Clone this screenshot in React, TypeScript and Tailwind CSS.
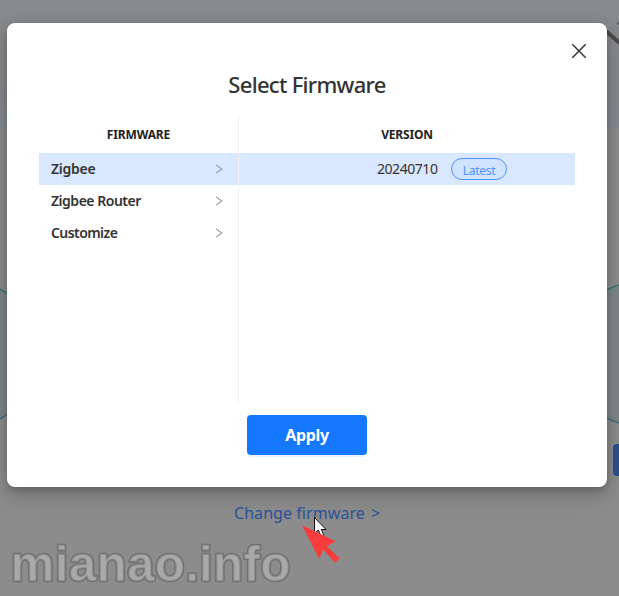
const firmwares = [
  { name: "Zigbee", tracking: "tracking-[-0.25px]", selected: true },
  { name: "Zigbee Router", tracking: "tracking-[-0.48px]", selected: false },
  { name: "Customize", tracking: "tracking-[-0.58px]", selected: false },
];

function Chevron() {
  return (
    <svg width="8" height="10" viewBox="0 0 8 10" fill="none" stroke="#9b9fa5" strokeWidth="1.1">
      <path d="M1.2 1 L6.8 5 L1.2 9" />
    </svg>
  );
}

function Backdrop() {
  return (
    <svg className="absolute inset-0" width="619" height="596" viewBox="0 0 619 596">
      <defs>
        <linearGradient id="hero" x1="0" y1="0" x2="0" y2="1">
          <stop offset="0" stopColor="#898a8c" />
          <stop offset="0.75" stopColor="#87888b" />
          <stop offset="1" stopColor="#848993" />
        </linearGradient>
      </defs>
      <rect width="619" height="596" fill="#8c8c8c" />
      <rect width="619" height="128" fill="url(#hero)" />
      <path d="M604 29.5 L622 45" stroke="#4b4b4b" strokeWidth="4" />
      <path d="M617 23 L622 25" stroke="#606060" strokeWidth="2" />
      <circle cx="-32" cy="354" r="72" fill="#7e8688" stroke="#2c6d7c" strokeWidth="1.3" />
      <circle cx="640" cy="354" r="72" fill="#7e8688" stroke="#2c6d7c" strokeWidth="1.3" />
      <rect x="613" y="444" width="20" height="32" rx="4" fill="#2b4f91" />
    </svg>
  );
}

function Annotations() {
  return (
    <svg className="pointer-events-none absolute inset-0" width="619" height="596" viewBox="0 0 619 596">
      <text
        x="10.5"
        y="580.5"
        fontSize="49.5"
        fontWeight="700"
        fontFamily="Liberation Sans, sans-serif"
        textLength="280"
        fill="#a9a9a9"
        stroke="#696969"
        strokeWidth="2.6"
        strokeLinejoin="round"
        paintOrder="stroke"
      >
        mianao.info
      </text>
      <text
        x="10.5"
        y="580.5"
        fontSize="49.5"
        fontWeight="700"
        fontFamily="Liberation Sans, sans-serif"
        textLength="280"
        fill="none"
        stroke="#7d7d7d"
        strokeOpacity="0.55"
        strokeWidth="2"
        strokeLinejoin="round"
      >
        mianao.info
      </text>
      <path
        d="M314.5 517.5 V533.5 L318.2 530 L321 536 L323.8 534.7 L321.2 529.5 H326 Z"
        fill="#fff"
        stroke="#111"
        strokeWidth="1"
      />
      <path
        d="M302 525.3 L335.7 541.3 L326.7 546.3 L339.7 558.3 L335.3 562.7 L323 549.8 L319.3 559 Z"
        fill="#f83b3b"
      />
    </svg>
  );
}

export default function App() {
  return (
    <div className="relative h-[596px] w-[619px] overflow-hidden font-['Noto_Sans','Open_Sans',sans-serif] text-[#333]">
      <Backdrop />
      <div className="absolute top-[23px] left-[7px] flex h-[464px] w-[600px] flex-col items-center rounded-[8px] bg-white px-8 shadow-[0_6px_16px_rgba(0,0,0,0.16),0_3px_6px_rgba(0,0,0,0.12),0_9px_28px_rgba(0,0,0,0.1)]">
        <button className="absolute top-[20px] right-[20px]" aria-label="Close">
          <svg width="16" height="16" viewBox="0 0 16 16" stroke="#3b3b3b" strokeWidth="1.6">
            <path d="M1.3 1.3 L14.7 14.7 M14.7 1.3 L1.3 14.7" />
          </svg>
        </button>
        <h1 className="mt-[45px] h-8 text-[22px] leading-8 font-medium tracking-[-0.7px] whitespace-nowrap">
          Select Firmware
        </h1>
        <div className="mt-[15px] flex h-[288px] w-[536px]">
          <section className="w-[200px] border-r border-[#f2f2f2]">
            <h2 className="flex h-[38px] items-center justify-center pt-[2px] text-[12px] font-bold tracking-[-0.15px] text-[#222]">
              FIRMWARE
            </h2>
            {firmwares.map((item) => (
              <div
                key={item.name}
                className={`flex h-8 items-center justify-between pr-[15px] pl-3 text-[14px] font-semibold ${item.tracking} ${item.selected ? "bg-[#dae8ff]" : ""}`}
              >
                <span className="pb-[2px]">{item.name}</span>
                <Chevron />
              </div>
            ))}
          </section>
          <section className="flex-1">
            <h2 className="flex h-[38px] items-center justify-center pt-[2px] text-[12px] font-bold tracking-[-0.2px] text-[#222]">
              VERSION
            </h2>
            <div className="flex h-8 items-center bg-[#dae8ff] pl-[138px] text-[14px]">
              <span className="w-[74px] pb-[2px] tracking-[-0.45px]">20240710</span>
              <span className="flex h-[22px] w-14 items-center justify-center rounded-full border border-[#4d94ff] bg-[#d0e3ff] pt-[3px] text-[12px] tracking-[-0.3px] text-[#4d94ff]">
                Latest
              </span>
            </div>
          </section>
        </div>
        <button className="mt-[12px] h-10 w-[120px] rounded-[4px] bg-[#1677ff] text-[16px] font-bold tracking-[-0.35px] text-white shadow-[0_2px_0_rgba(5,145,255,0.1)]">
          Apply
        </button>
      </div>
      <a className="absolute top-[501px] left-[234px] text-[16px] leading-6 tracking-[0.06px] whitespace-nowrap text-[#2a5298]">
        Change firmware <span className="ml-[2px]">&gt;</span>
      </a>
      <Annotations />
    </div>
  );
}
